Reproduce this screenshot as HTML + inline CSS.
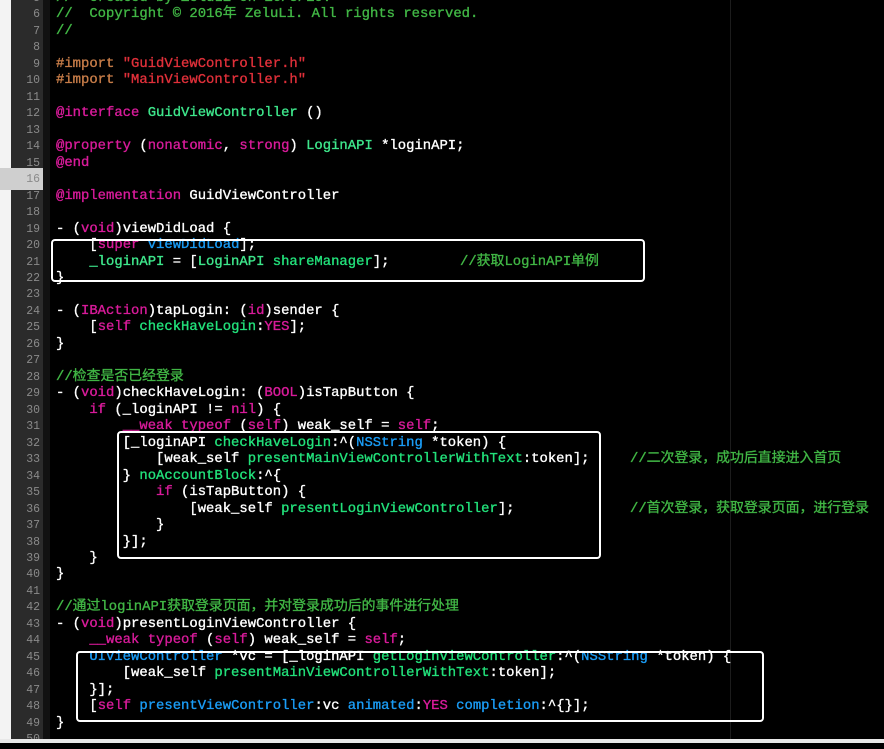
<!DOCTYPE html>
<html><head><meta charset="utf-8"><style>
body{margin:0;width:884px;height:743px;overflow:hidden;background:#000;position:relative;font-family:"Liberation Mono","Noto Sans CJK SC",monospace;font-size:13.9px;}
#white{position:absolute;left:0;top:0;width:11px;height:743px;background:#f3f3f3}
#gut{position:absolute;left:11px;top:0;width:32px;height:743px;background:#2b2b2b}
#strip{position:absolute;left:43px;top:0;width:7px;height:743px;background:#111}
.ln{position:absolute;left:11px;width:29px;text-align:right;color:#8a8a8a;font-size:11.5px;}
.l{position:absolute;left:56px;white-space:pre;color:#fff;height:16.47px;line-height:16.47px;-webkit-text-stroke:0.35px currentColor;}
.c{color:#41b645}.k{color:#d81b9a}.s{color:#e0303a}.p{color:#c67c48}.g{color:#3ee68b}.b{color:#1a9cf5}.m{color:#22e07a}
.cm{position:absolute;color:#41b645;white-space:pre}
.box{position:absolute;border:2px solid #fff;border-radius:4px}
#vline{position:absolute;left:730px;top:0;width:1px;height:743px;background:#1c1c1c}
#bot{position:absolute;left:0;top:739px;width:884px;height:4px;background:#e8e8e8}
</style></head><body>
<div id="white"></div><div id="gut"></div><div id="strip"></div><div id="vline"></div>
<div style="position:absolute;left:0;top:168px;width:43px;height:22px;background:#cfcfcf"></div>
<div id="lines"></div>
<div class="box" style="left:51px;top:239px;width:590px;height:39px"></div>
<div class="box" style="left:117px;top:431px;width:480px;height:124px"></div>
<div class="box" style="left:76px;top:651px;width:684px;height:67px"></div>
<div id="bot"></div>
<script>
var L={
5:'<span class="c">//  Created by ZeluLi on 16/3/10.</span>',
6:'<span class="c">//  Copyright © 2016年 ZeluLi. All rights reserved.</span>',
7:'<span class="c">//</span>',8:'',
9:'<span class="p">#import </span><span class="s">"GuidViewController.h"</span>',
10:'<span class="p">#import </span><span class="s">"MainViewController.h"</span>',11:'',
12:'<span class="k">@interface</span> <span class="g">GuidViewController</span> ()',13:'',
14:'<span class="k">@property</span> (<span class="k">nonatomic</span>, <span class="k">strong</span>) <span class="g">LoginAPI</span> *loginAPI;',
15:'<span class="k">@end</span>',16:'',
17:'<span class="k">@implementation</span> GuidViewController',18:'',
19:'- (<span class="k">void</span>)viewDidLoad {',
20:'    [<span class="k">super</span> <span class="b">viewDidLoad</span>];',
21:'    <span class="g">_loginAPI</span> = [<span class="g">LoginAPI</span> <span class="m">shareManager</span>];<span class="cm" style="left:404px">//获取LoginAPI单例</span>',
22:'}',23:'',
24:'- (<span class="k">IBAction</span>)tapLogin: (<span class="k">id</span>)sender {',
25:'    [<span class="k">self</span> <span class="m">checkHaveLogin</span>:<span class="k">YES</span>];',
26:'}',27:'',
28:'<span class="c">//检查是否已经登录</span>',
29:'- (<span class="k">void</span>)checkHaveLogin: (<span class="k">BOOL</span>)isTapButton {',
30:'    <span class="k">if</span> (_loginAPI != <span class="k">nil</span>) {',
31:'        <span class="k">__weak typeof</span> (<span class="k">self</span>) weak_self = <span class="k">self</span>;',
32:'        [_loginAPI <span class="m">checkHaveLogin</span>:^(<span class="b">NSString</span> *token) {',
33:'            [weak_self <span class="m">presentMainViewControllerWithText</span>:token];<span class="cm" style="left:574px">//二次登录，成功后直接进入首页</span>',
34:'        } <span class="m">noAccountBlock</span>:^{',
35:'            <span class="k">if</span> (isTapButton) {',
36:'                [weak_self <span class="m">presentLoginViewController</span>];<span class="cm" style="left:574px">//首次登录，获取登录页面，进行登录</span>',
37:'            }',38:'        }];',39:'    }',40:'}',41:'',
42:'<span class="c">//通过loginAPI获取登录页面，并对登录成功后的事件进行处理</span>',
43:'- (<span class="k">void</span>)presentLoginViewController {',
44:'    <span class="k">__weak typeof</span> (<span class="k">self</span>) weak_self = <span class="k">self</span>;',
45:'    <span class="b">UIViewController</span> *vc = [_loginAPI <span class="m">getLoginViewController</span>:^(<span class="b">NSString</span> *token) {',
46:'        [weak_self <span class="m">presentMainViewControllerWithText</span>:token];',
47:'    }];',
48:'    [<span class="k">self</span> <span class="b">presentViewController</span>:vc <span class="b">animated</span>:<span class="k">YES</span> <span class="b">completion</span>:^{}];',
49:'}',50:''};
var h='';for(var n=5;n<=50;n++){var t=-10+(n-5)*16.47;
h+='<div class="ln" style="top:'+(t+1)+'px;line-height:16.47px">'+n+'</div><div class="l" style="top:'+t+'px">'+L[n]+'</div>';}
document.getElementById('lines').innerHTML=h;
</script>
</body></html>
